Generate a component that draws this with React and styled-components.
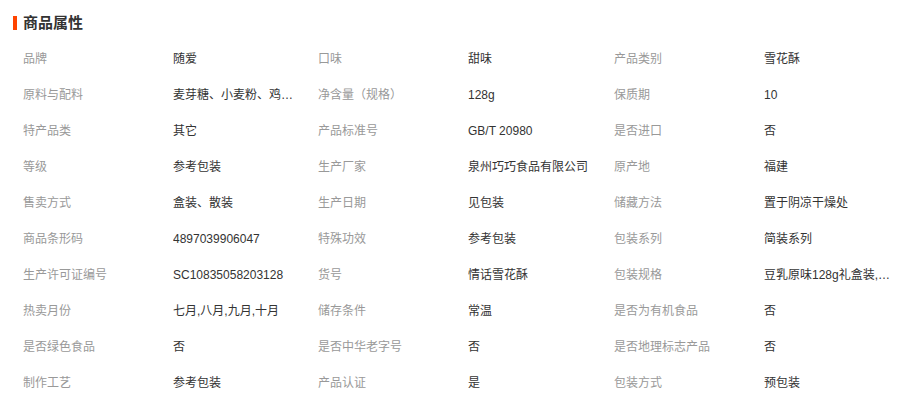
import React from 'react'
import styled, { createGlobalStyle } from 'styled-components'

const rows = [
    ['品牌', '随爱', '口味', '甜味', '产品类别', '雪花酥'],
    ['原料与配料', '麦芽糖、小麦粉、鸡蛋、黄油、奶粉', '净含量（规格）', '128g', '保质期', '10'],
    ['特产品类', '其它', '产品标准号', 'GB/T 20980', '是否进口', '否'],
    ['等级', '参考包装', '生产厂家', '泉州巧巧食品有限公司', '原产地', '福建'],
    ['售卖方式', '盒装、散装', '生产日期', '见包装', '储藏方法', '置于阴凉干燥处'],
    ['商品条形码', '4897039906047', '特殊功效', '参考包装', '包装系列', '简装系列'],
    ['生产许可证编号', 'SC10835058203128', '货号', '情话雪花酥', '包装规格', '豆乳原味128g礼盒装,简装'],
    ['热卖月份', '七月,八月,九月,十月', '储存条件', '常温', '是否为有机食品', '否'],
    ['是否绿色食品', '否', '是否中华老字号', '否', '是否地理标志产品', '否'],
    ['制作工艺', '参考包装', '产品认证', '是', '包装方式', '预包装'],
]

function App() {
    return (
        <Wrap>
            <GlobalStyle />
            <Header>
                <Bar />
                <Title>商品属性</Title>
            </Header>
            <Table>
                {rows.map((row, i) => (
                    <Row key={i}>
                        {row.map((cell, j) =>
                            j % 2 === 0
                                ? <Label key={j}>{cell}</Label>
                                : <Value key={j}>{cell}</Value>
                        )}
                    </Row>
                ))}
            </Table>
        </Wrap>
    )
}

export default App

const GlobalStyle = createGlobalStyle`
    body {
        margin: 0;
        background: #fff;
        font-family: "Liberation Sans", "Noto Sans CJK SC", sans-serif;
    }
`

const Wrap = styled.div`
    width: 905px;
`

const Header = styled.div`
    height: 40px;
    box-sizing: border-box;
    padding: 6px 0 0 13px;
    display: flex;
    align-items: center;
`

const Bar = styled.div`
    width: 4px;
    height: 14px;
    background: #ff4400;
    margin-right: 6px;
`

const Title = styled.h2`
    margin: 0;
    font-size: 15px;
    font-weight: bold;
    color: #333;
    line-height: 20px;
`

const Table = styled.div`
    padding-left: 23px;
    padding-top: 0.5px;
`

const Row = styled.div`
    display: grid;
    grid-template-columns: 150px 145px 150px 146px 150px 1fr;
    height: 36px;
    line-height: 36px;
    font-size: 12px;
`

const Label = styled.div`
    color: #999;
    white-space: nowrap;
`

const Value = styled.div`
    color: #333;
    width: 128px;
    white-space: nowrap;
    overflow: hidden;
    text-overflow: ellipsis;
`
